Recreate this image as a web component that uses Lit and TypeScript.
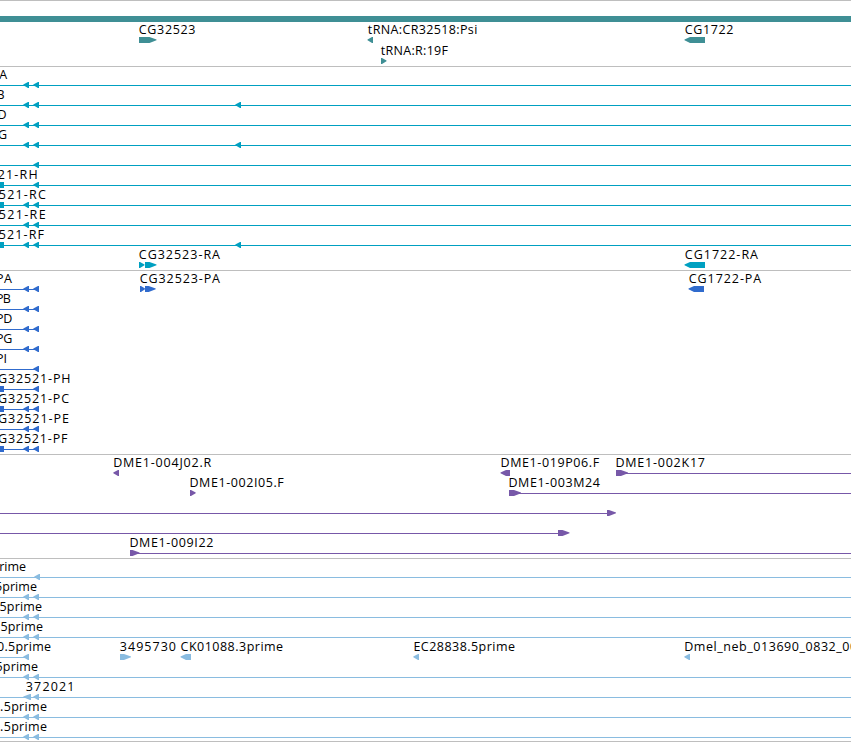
import { LitElement, html, svg, css } from "lit";
import { customElement, property } from "lit/decorators.js";

// Label: text, start x, drawn width.
type Label = [string, number, number];
// Arrow: left x, right x, direction.
type Arrow = [number, number, "l" | "r"];
interface Row {
  labels?: Label[];
  line?: [number, number];
  arrows?: Arrow[];
  blocks?: [number, number][];
}
interface Track {
  kind: string;
  rows: Row[];
}

const W = 851;
const A1: Arrow = [23.3, 29, "l"];
const A2: Arrow = [33.3, 39, "l"];
const A3: Arrow = [235.3, 241, "l"];
const full: [number, number] = [0, W];
const stub: [number, number] = [0, 38];
const edge: [number, number][] = [[0, 4]];

const tracks: Track[] = [
  {
    kind: "gene",
    rows: [
      {
        labels: [["CG32523", 138.8, 56.7], ["tRNA:CR32518:Psi", 367.8, 109.5], ["CG1722", 684.8, 48.7]],
        arrows: [[139, 156.5, "r"], [367.5, 373, "l"], [684.5, 705, "l"]],
      },
      { labels: [["tRNA:R:19F", 380.8, 67.2]], arrows: [[381, 386.5, "r"]] },
    ],
  },
  {
    kind: "transcript",
    rows: [
      { labels: [["A", -0.8, 8]], line: full, arrows: [A1, A2] },
      { labels: [["B", -3.5, 8.5]], line: full, arrows: [A1, A2, A3] },
      { labels: [["D", -2.6, 9.6]], line: full, arrows: [A1, A2] },
      { labels: [["G", -2, 9.2]], line: full, arrows: [A1, A2, A3] },
      { line: full, arrows: [A2] },
      { labels: [["21-RH", -2.2, 39.8]], line: full, arrows: [A2], blocks: edge },
      { labels: [["521-RC", -1.2, 47]], line: full, arrows: [A1, A2], blocks: edge },
      { labels: [["521-RE", -1.2, 46.8]], line: full, arrows: [A1, A2] },
      { labels: [["521-RF", -1.2, 45.2]], line: full, arrows: [A1, A2, A3], blocks: edge },
      {
        labels: [["CG32523-RA", 138.8, 81.2], ["CG1722-RA", 684.8, 73.2]],
        arrows: [[139, 144.5, "r"], [145, 156.5, "r"], [684.5, 705, "l"]],
      },
    ],
  },
  {
    kind: "protein",
    rows: [
      {
        labels: [["PA", -4, 16], ["CG32523-PA", 139.8, 80.2], ["CG1722-PA", 688.8, 72.4]],
        line: stub,
        arrows: [A1, A2, [140, 145, "r"], [145, 155.7, "r"], [688.5, 704, "l"]],
      },
      { labels: [["PB", -4, 14.8]], line: stub, arrows: [A1, A2] },
      { labels: [["PD", -4, 16.3]], line: stub, arrows: [A1, A2] },
      { labels: [["PG", -4, 16.3]], line: stub, arrows: [A1, A2] },
      { labels: [["PI", -4, 11]], line: stub, arrows: [A2] },
      { labels: [["G32521-PH", -2, 72.5]], line: stub, arrows: [A2], blocks: edge },
      { labels: [["G32521-PC", -2, 71]], line: stub, arrows: [A1, A2], blocks: edge },
      { labels: [["G32521-PE", -2, 71]], line: stub, arrows: [A1, A2] },
      { labels: [["G32521-PF", -2, 69.5]], line: stub, arrows: [A1, A2], blocks: edge },
    ],
  },
  {
    kind: "clone",
    rows: [
      {
        labels: [["DME1-004J02.R", 113.2, 98], ["DME1-019P06.F", 500.5, 98.6], ["DME1-002K17", 615.4, 89.6]],
        arrows: [[113.3, 119, "l"], [500.5, 510, "l"], [616, 628, "r"]],
        line: [625, W],
      },
      {
        labels: [["DME1-002I05.F", 189.4, 94.4], ["DME1-003M24", 508.4, 91.6]],
        arrows: [[190, 195.7, "r"], [509, 521, "r"]],
        line: [518, W],
      },
      { line: [0, 608], arrows: [[607, 616, "r"]] },
      { line: [0, 559], arrows: [[558, 569.5, "r"]] },
      { labels: [["DME1-009I22", 129.4, 84]], line: [136, W], arrows: [[130, 139.5, "r"]] },
    ],
  },
  {
    kind: "est",
    rows: [
      { labels: [["rime", -0.8, 26.8]], line: full, arrows: [[34.3, 40, "l"]] },
      { labels: [["5prime", -5, 42]], line: full, arrows: [A1, A2] },
      { labels: [["5prime", -0.5, 42.5]], line: full, arrows: [A1, A2] },
      { labels: [["5prime", 0.4, 42.6]], line: full, arrows: [A1, A2] },
      {
        labels: [
          ["0.5prime", -3, 54], ["3495730", 119.8, 56.2], ["CK01088.3prime", 180.6, 102.5],
          ["EC28838.5prime", 413.4, 101.6], ["Dmel_neb_013690_0832_00", 684.2, 173],
        ],
        line: [0, 25],
        arrows: [A1, [120, 131, "r"], [180.5, 191, "l"], [413.3, 419, "l"], [684.3, 690, "l"]],
      },
      { labels: [["5prime", -4.5, 42.5]], line: full, arrows: [A1, A2] },
      { labels: [["372021", 25.8, 48.6]], line: full, arrows: [[23.3, 31, "l"], A2] },
      { labels: [[".5prime", 0, 47]], line: full, arrows: [A1, A2] },
      { labels: [[".5prime", 0, 47]], line: full, arrows: [A1, A2] },
    ],
  },
];

@customElement("feature-row")
class FeatureRow extends LitElement {
  @property({ attribute: false }) row: Row = {};

  static styles = css`
    :host { display: block; height: 20px; }
    svg { display: block; width: 100%; height: 20px; overflow: visible; }
    text {
      font-family: "Open Sans", "Noto Sans", sans-serif;
      font-size: 12.5px;
      fill: #000;
      white-space: pre;
    }
    .mark { fill: currentColor; }
  `;

  private arrow([x1, x2, dir]: Arrow) {
    const w = x2 - x1;
    const head = w < 8 ? w - 1 : dir === "l" ? 5.5 : 7;
    const d = dir === "l"
      ? `M${x1} 16.6L${x1 + head} 14H${x2}V20H${x1 + head}L${x1} 17.2Z`
      : `M${x2} 16.6L${x2 - head} 14H${x1}V20H${x2 - head}L${x2} 17.2Z`;
    return svg`<path class="mark" d=${d}></path>`;
  }

  render() {
    const { labels = [], line, arrows = [], blocks = [] } = this.row;
    return html`<svg>
      ${line ? svg`<rect class="mark" x=${line[0]} y="17" width=${line[1] - line[0]} height="1"></rect>` : null}
      ${blocks.map(([a, b]) => svg`<rect class="mark" x=${a} y="14" width=${b - a} height="6"></rect>`)}
      ${arrows.map((a) => this.arrow(a))}
      ${labels.map(([t, x, w]) => svg`<text x=${x} y="11" textLength=${w}>${t}</text>`)}
    </svg>`;
  }
}

@customElement("app-root")
class AppRoot extends LitElement {
  static styles = css`
    :host {
      display: block;
      width: 851px;
      height: 742px;
      overflow: hidden;
      box-sizing: border-box;
      background: #fff;
    }
    .track {
      box-sizing: border-box;
      border-top: 1px solid #bebebe;
      padding: 1px 0 2px;
    }
    .gene { color: #3f8f95; padding: 15px 0 1px; }
    .gene feature-row { height: 21px; }
    .bar { height: 6px; margin-bottom: 1px; background: #3f8f95; }
    .transcript { color: #00a0c1; }
    .protein { color: #306bcd; }
    .clone { color: #7758a8; }
    .est { color: #8abce0; padding-bottom: 1px; border-bottom: 1px solid #bebebe; }
  `;

  render() {
    return tracks.map((t) => html`<section class="track ${t.kind}">
      ${t.kind === "gene" ? html`<div class="bar"></div>` : null}
      ${t.rows.map((r) => html`<feature-row .row=${r}></feature-row>`)}
    </section>`);
  }
}
